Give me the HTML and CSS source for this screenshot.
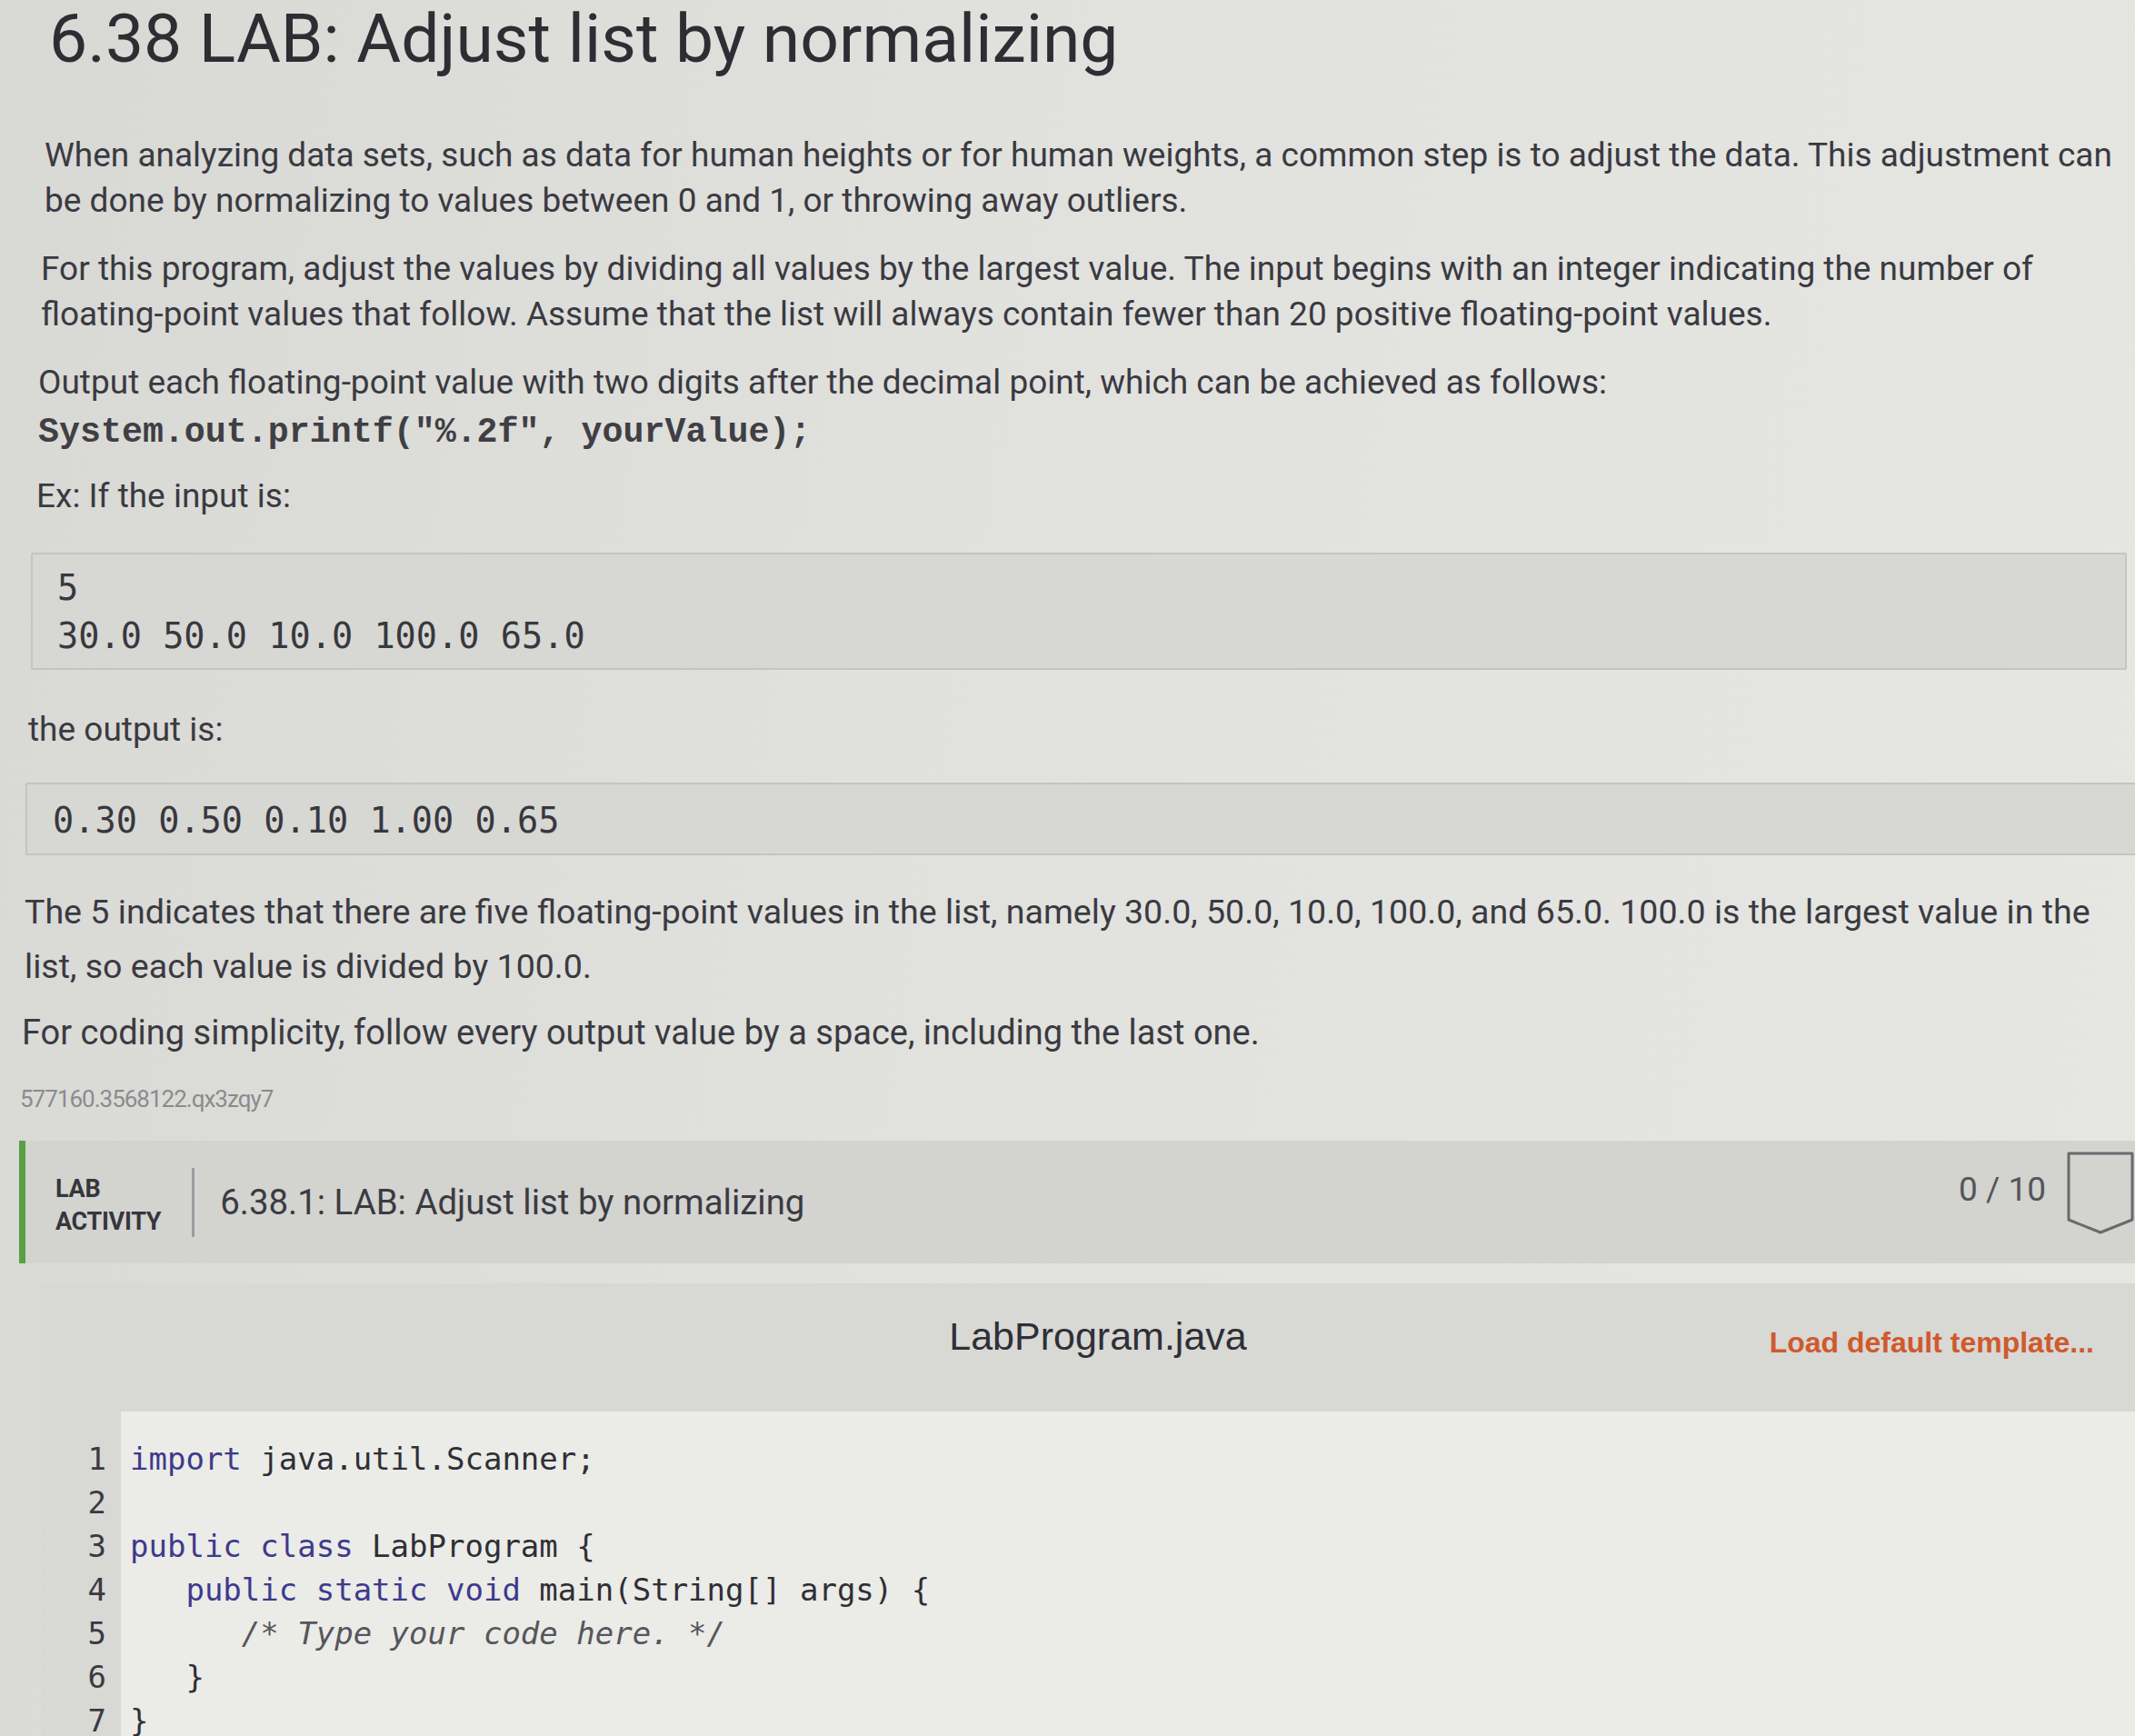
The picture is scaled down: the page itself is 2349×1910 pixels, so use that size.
FILE: index.html
```html
<!DOCTYPE html>
<html lang="en">
<head>
<meta charset="utf-8">
<title>6.38 LAB: Adjust list by normalizing</title>
<link rel="stylesheet" href="styles.css">
</head>
<body>
<main class="page">
  <h1 class="title">6.38 LAB: Adjust list by normalizing</h1>

  <p class="para p1">When analyzing data sets, such as data for human heights or for human weights, a common step is to adjust the data. This adjustment can<br>be done by normalizing to values between 0 and 1, or throwing away outliers.</p>

  <p class="para p2">For this program, adjust the values by dividing all values by the largest value. The input begins with an integer indicating the number of<br>floating-point values that follow. Assume that the list will always contain fewer than 20 positive floating-point values.</p>

  <div class="para p3">
    <div>Output each floating-point value with two digits after the decimal point, which can be achieved as follows:</div>
    <div class="printf">System.out.printf("%.2f", yourValue);</div>
  </div>

  <p class="para ex">Ex: If the input is:</p>

  <div class="sample sample-in">
    <div>5</div>
    <div>30.0 50.0 10.0 100.0 65.0</div>
  </div>

  <p class="para outlabel">the output is:</p>

  <div class="sample sample-out">
    <div>0.30 0.50 0.10 1.00 0.65</div>
  </div>

  <p class="para p4">The 5 indicates that there are five floating-point values in the list, namely 30.0, 50.0, 10.0, 100.0, and 65.0. 100.0 is the largest value in the<br>list, so each value is divided by 100.0.</p>

  <p class="para p5">For coding simplicity, follow every output value by a space, including the last one.</p>

  <p class="ident">577160.3568122.qx3zqy7</p>

  <section class="lab-bar">
    <div class="lab-tag">LAB<br>ACTIVITY</div>
    <div class="lab-sep"></div>
    <div class="lab-title">6.38.1: LAB: Adjust list by normalizing</div>
    <div class="lab-score">0 / 10</div>
    <svg class="lab-badge" viewBox="0 0 76 92" aria-hidden="true">
      <path d="M3 3 H73 V76 L38 90 L3 76 Z" fill="none" stroke="#6a6a6e" stroke-width="3" stroke-linejoin="round"/>
    </svg>
  </section>

  <section class="editor">
    <div class="editor-head">
      <div class="file-name">LabProgram.java</div>
      <div class="load-template">Load default template...</div>
    </div>
    <div class="editor-body">
      <div class="gutter">
        <div>1</div><div>2</div><div>3</div><div>4</div><div>5</div><div>6</div><div>7</div>
      </div>
      <div class="code">
        <div class="ln"><span class="kw">import</span> java.util.Scanner;</div>
        <div class="ln"> </div>
        <div class="ln"><span class="kw">public class</span> LabProgram {</div>
        <div class="ln">   <span class="kw">public static void</span> main(String[] args) {</div>
        <div class="ln">      <span class="cm">/* Type your code here. */</span></div>
        <div class="ln">   }</div>
        <div class="ln">}</div>
      </div>
    </div>
  </section>
</main>
</body>
</html>
```

FILE: styles.css
```css
html, body {
  margin: 0;
  padding: 0;
}

body {
  width: 2349px;
  height: 1910px;
  overflow: hidden;
  background: linear-gradient(100deg, #d8d8d5 0%, #e1e1de 45%, #e6e6e3 100%);
  font-family: Roboto, "Noto Sans", sans-serif;
  color: #3a3a41;
}

.page {
  padding-top: 2px;
}

.title {
  margin: 0 0 0 54px;
  font-size: 75px;
  line-height: 80px;
  font-weight: 400;
  color: #2d2d34;
}

.para {
  margin: 0;
  font-size: 37px;
  line-height: 50px;
}

.p1 { margin: 64px 0 0 49px; }
.p2 { margin: 25px 0 0 45px; }
.p3 { margin: 25px 0 0 42px; }

.printf {
  margin-top: 5px;
  font-family: "Liberation Mono", "Courier New", monospace;
  font-weight: 700;
  font-size: 38.3px;
  line-height: 50px;
  color: #3f3f44;
}

.ex { margin: 20px 0 0 40px; }

.sample {
  font-family: "DejaVu Sans Mono", monospace;
  font-size: 38.6px;
  line-height: 53px;
  color: #38383e;
  background: #d7d7d4;
  border: 2px solid #c4c4c1;
  border-radius: 2px;
}

.sample-in {
  margin: 37px 9px 0 34px;
  padding: 10px 27px 9px;
}

.sample-out {
  margin: 33px -4px 0 28px;
  padding: 13px 28px 10px;
}

.outlabel { margin: 41px 0 0 31px; }

.p4 {
  margin: 32px 0 0 27px;
  line-height: 60px;
  font-size: 37.6px;
}

.p5 {
  margin: 18px 0 0 24px;
  font-size: 38px;
}

.ident {
  margin: 33px 0 0 22px;
  font-size: 26px;
  line-height: 30px;
  letter-spacing: -1px;
  color: #8b8b8e;
}

.lab-bar {
  margin: 31px 0 0 21px;
  height: 135px;
  display: flex;
  align-items: center;
  background: #d3d3d0;
  border-left: 7px solid #58a045;
}

.lab-tag {
  align-self: flex-start;
  margin: 35px 0 0 33px;
  font-weight: 700;
  font-size: 27px;
  line-height: 36px;
  color: #36363c;
  letter-spacing: -0.3px;
}

.lab-sep {
  width: 3px;
  height: 76px;
  margin-left: 34px;
  background: #9c9ca0;
}

.lab-title {
  margin-left: 28px;
  font-size: 38.4px;
  color: #3b3b42;
  flex: 1;
}

.lab-score {
  font-size: 37px;
  color: #55555b;
  margin-right: 22px;
  align-self: flex-start;
  margin-top: 32px;
}

.lab-badge {
  width: 76px;
  height: 92px;
  align-self: flex-start;
  margin-top: 11px;
  flex: none;
}

.editor {
  margin: 22px 0 0 45px;
  background: #d8d8d5;
}

.editor-head {
  height: 141px;
  display: flex;
  align-items: center;
  position: relative;
}

.file-name {
  position: absolute;
  left: 0;
  right: 0;
  top: 0;
  bottom: 0;
  display: flex;
  align-items: center;
  justify-content: center;
  padding-left: 22px;
  padding-bottom: 24px;
  font-family: "Liberation Sans", Arial, sans-serif;
  font-size: 43px;
  color: #2f2f36;
}

.load-template {
  margin-left: auto;
  margin-right: 45px;
  margin-bottom: 10px;
  position: relative;
  font-family: "Liberation Sans", Arial, sans-serif;
  font-weight: 700;
  font-size: 32px;
  color: #cf5a2c;
}

.editor-body {
  display: flex;
  height: 420px;
}

.gutter {
  width: 88px;
  padding-top: 28px;
  padding-right: 16px;
  box-sizing: border-box;
  text-align: right;
  font-family: "DejaVu Sans Mono", monospace;
  font-size: 34px;
  line-height: 48px;
  color: #3a3a40;
  background: #d8d8d5;
}

.code {
  flex: 1;
  padding: 28px 0 0 10px;
  font-family: "DejaVu Sans Mono", monospace;
  font-size: 34px;
  line-height: 48px;
  color: #2f2f35;
  background: #ebebe8;
}

.ln {
  white-space: pre;
  height: 48px;
}

.kw { color: #3d3a8c; }
.cm { color: #56565c; font-style: italic; }
```
